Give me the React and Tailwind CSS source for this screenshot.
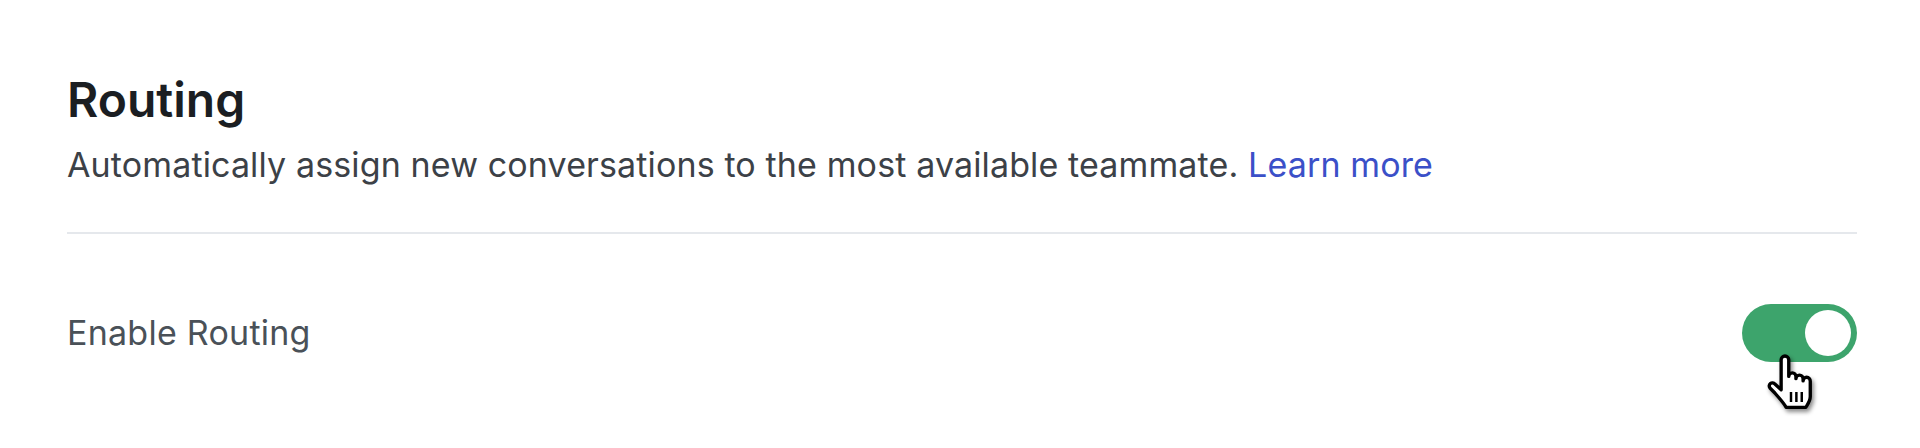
import React from 'react';

const HandCursor = () => (
  <svg
    className="absolute left-[24px] top-[50px] w-[50px] h-[56px] drop-shadow-[2px_3px_2px_rgba(0,0,0,0.45)]"
    viewBox="0 0 22 25"
    fill="none"
  >
    <path
      d="M6.6 2.6a1.7 1.7 0 0 1 3.4 0V10a1.6 1.6 0 0 1 3.2 0v1a1.6 1.6 0 0 1 3.2 0v1a1.6 1.6 0 0 1 3.2 0v7c0 2-1 3.2-2 4.8H8.8c-1-2-3-4-5-6.4L1.6 15.2a1.4 1.4 0 0 1 2.2-1.8L6.6 16Z"
      fill="#fff"
      stroke="#000"
      strokeWidth="1.5"
      strokeLinejoin="round"
    />
    <path d="M11 17v4.4M13.4 17v4.4M15.8 17v4.4" stroke="#000" strokeWidth="1.1" />
  </svg>
);

const Toggle = ({ on = true }) => (
  <div className="relative">
    <button
      className={`flex items-center w-[115px] h-[58px] rounded-full px-[6px] ${on ? 'bg-[#3da46c] justify-end' : 'bg-gray-300 justify-start'}`}
    >
      <span className="block w-[46px] h-[46px] rounded-full bg-white" />
    </button>
    <HandCursor />
  </div>
);

export default function App() {
  return (
    <div className="bg-white min-h-[448px] pl-[67px] pr-[63px] pt-[72px] font-['Inter','Liberation_Sans',sans-serif]">
      <h1 className="text-[48px] leading-[56px] font-semibold text-[#1b1e22]">Routing</h1>
      <p className="mt-[17px] text-[34px] leading-[40px] tracking-[0.13px] text-[#3c4147]">
        Automatically assign new conversations to the most available teammate.{' '}
        <a href="#" className="text-[#3b50c8]">Learn more</a>
      </p>
      <div className="mt-[47px] h-[2px] bg-[#e5e8ec]" />
      <div className="flex items-center justify-between pt-[70px]">
        <span className="text-[34px] leading-[40px] tracking-[0.25px] text-[#4a5158]">Enable Routing</span>
        <Toggle on />
      </div>
    </div>
  );
}
